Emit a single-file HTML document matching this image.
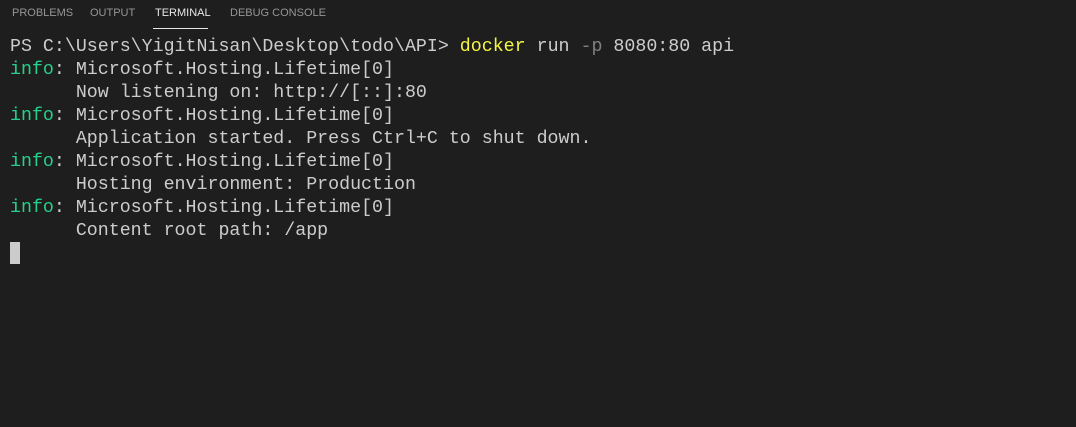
<!DOCTYPE html>
<html><head><meta charset="utf-8"><style>
body{margin:0;width:1076px;height:427px;background:#1e1e1e;overflow:hidden;position:relative}
.tabs{position:absolute;top:0;left:0;height:30px;font-family:"Liberation Sans",sans-serif;font-size:11px;color:#969696}
.tab{position:absolute;top:7px;white-space:nowrap}
.ul{position:absolute;top:28px;left:153px;width:55px;height:1px;background:#e7e7e7}
pre{position:absolute;left:10px;top:36px;margin:0;font-family:"Liberation Mono",monospace;font-size:18.3px;line-height:23px;color:#cccccc}
.g{color:#23d18b}.y{color:#f5f543}.d{color:#808080}
.cur{position:absolute;left:10px;top:242px;width:10px;height:22px;background:#cccccc}
</style></head><body>
<div class="tabs">
<span class="tab" style="left:12px">PROBLEMS</span>
<span class="tab" style="left:90px">OUTPUT</span>
<span class="tab" style="left:155px;color:#e7e7e7">TERMINAL</span>
<span class="tab" style="left:230px">DEBUG CONSOLE</span>
</div>
<div class="ul"></div>
<pre>PS C:\Users\YigitNisan\Desktop\todo\API&gt; <span class="y">docker</span> run <span class="d">-p</span> 8080:80 api
<span class="g">info</span>: Microsoft.Hosting.Lifetime[0]
      Now listening on: http://[::]:80
<span class="g">info</span>: Microsoft.Hosting.Lifetime[0]
      Application started. Press Ctrl+C to shut down.
<span class="g">info</span>: Microsoft.Hosting.Lifetime[0]
      Hosting environment: Production
<span class="g">info</span>: Microsoft.Hosting.Lifetime[0]
      Content root path: /app</pre>
<div class="cur"></div>
</body></html>
